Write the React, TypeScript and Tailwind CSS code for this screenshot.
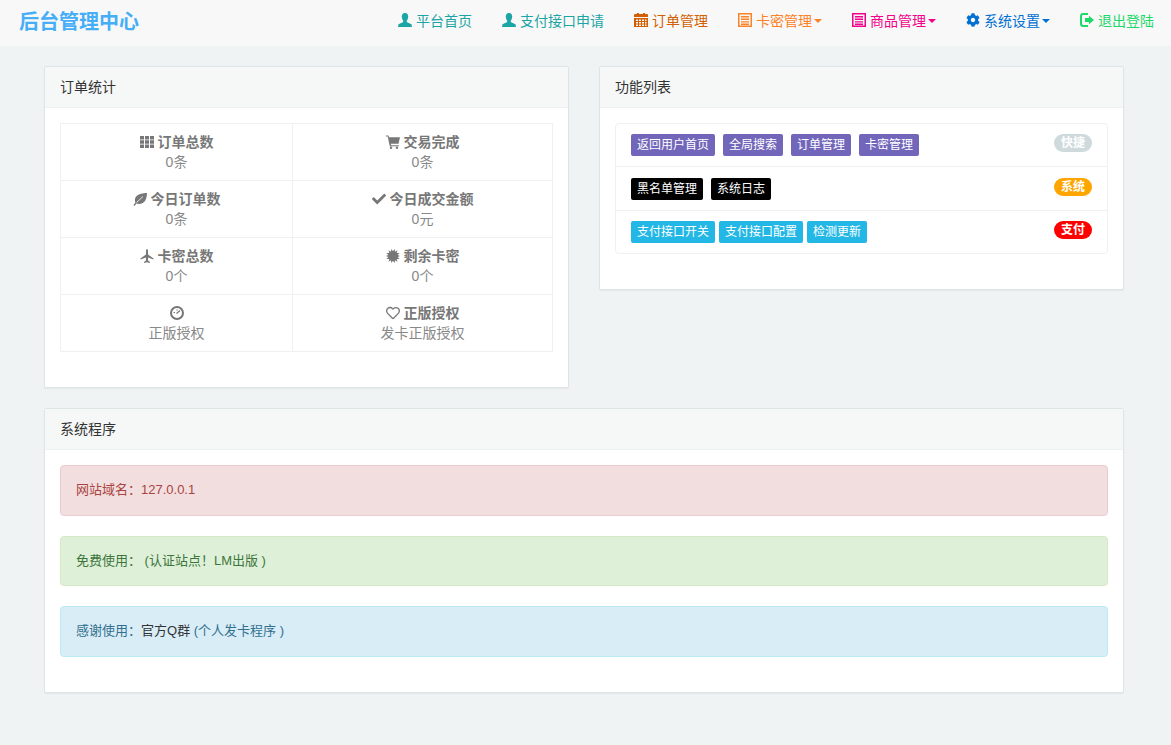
import React from "react";
import { FaCog, FaCheck, FaRegHeart } from "react-icons/fa";

const UserIcon = () => (
  <svg width="14" height="14" viewBox="0 0 14 14" fill="currentColor" className="shrink-0 -mt-[2px]">
    <path d="M7 0C9.200 0 10.200 1.600 10.200 3.600 10.200 5.400 9.400 7 8.800 7.800 8.600 8.600 8.800 9.200 9.600 9.600 11 10.200 13 10.800 13.600 11.600L14 14H0L.4 11.600C1 10.800 3 10.200 4.400 9.600 5.200 9.200 5.400 8.600 5.200 7.800 4.600 7 3.800 5.400 3.800 3.600 3.800 1.600 4.800 0 7 0Z" />
  </svg>
);
const CalendarIcon = () => (
  <svg width="14" height="14" viewBox="0 0 14 14" fill="currentColor" className="shrink-0 -mt-[2px]">
    <path d="M1 1h2V0h2v1h4V0h2v1h2a1 1 0 0 1 1 1v2H0V2a1 1 0 0 1 1-1Z" />
    <path fillRule="evenodd" d="M0 5h14v9H0ZM2 6.500v1.500h2V6.500Zm3 0v1.500h2V6.500Zm3 0v1.500h2V6.500Zm3 0v1.500h1.500V6.500ZM2 9v1.500h2V9Zm3 0v1.500h2V9Zm3 0v1.500h2V9Zm3 0v1.500h1.500V9ZM2 11.500V13h2v-1.500Zm3 0V13h2v-1.500Zm3 0V13h2v-1.500Zm3 0V13h1.500v-1.500Z" />
  </svg>
);
const ListIcon = () => (
  <svg width="14" height="14" viewBox="0 0 14 14" fill="currentColor" className="shrink-0 -mt-[2px]">
    <path fillRule="evenodd" d="M0 0h14v14H0ZM1.500 1.500v11h11v-11ZM3 3h8v1.400H3Zm0 2.600h8V7H3Zm0 2.600h8v1.400H3Zm0 2.400h8V12H3Z" />
  </svg>
);
const LogoutIcon = () => (
  <svg width="14" height="14" viewBox="0 0 14 14" fill="currentColor" className="shrink-0 -mt-[2px]">
    <path d="M3 0h5v2H3.200C2.500 2 2 2.500 2 3.200v7.600c0 .7.5 1.200 1.200 1.200H8v2H3c-1.700 0-3-1.300-3-3V3c0-1.700 1.300-3 3-3Z" />
    <path d="M9 2.800 14 7l-5 4.200V9H5V5h4Z" />
  </svg>
);
const ThIcon = () => (
  <svg width="14" height="14" viewBox="0 0 14 14" fill="currentColor" className="shrink-0">
    <path d="M0 1h4v3.400H0Zm5 0h4v3.400H5Zm5 0h4v3.400h-4ZM0 5.300h4v3.400H0Zm5 0h4v3.400H5Zm5 0h4v3.400h-4ZM0 9.600h4V13H0Zm5 0h4V13H5Zm5 0h4V13h-4Z" />
  </svg>
);
const CartIcon = () => (
  <svg width="14" height="14" viewBox="0 0 14 14" fill="currentColor" className="shrink-0">
    <path d="M0 0.500h2.400l.7 1.800H14l-1.500 6.500H4.800L5.200 10.200h7.600v1H3.800L1.700 1.500H0Z" />
    <circle cx="5" cy="12.700" r="1.200" />
    <circle cx="11" cy="12.700" r="1.200" />
  </svg>
);
const LeafIcon = () => (
  <svg width="14" height="14" viewBox="0 0 14 14" className="shrink-0">
    <path fill="currentColor" d="M14 1C14 1 9 1 5 3 1.500 4.800 1.500 8.500 2.500 10.500L.5 13 1.500 14 3.500 11.500C6 12.500 10 12 12 9 14 6 14 1 14 1Z" />
    <path fill="none" stroke="#fff" strokeWidth="0.800" d="M3.500 10.500 10 4.500" />
  </svg>
);
const PlaneIcon = () => (
  <svg width="14" height="14" viewBox="0 0 14 14" fill="currentColor" className="shrink-0">
    <path d="M7 0C7.700 0 8 1 8 2V5.500L13.500 9.500V10.500L8 8.500V11.500L10 13V14L7 13.200 4 14V13L6 11.500V8.500L.5 10.500V9.500L6 5.500V2C6 1 6.300 0 7 0Z" />
  </svg>
);
const certPoints = Array.from({ length: 28 }, (_, i) => {
  const a = (i * Math.PI) / 14;
  const r = i % 2 ? 4.8 : 7.2;
  return `${(7 + r * Math.cos(a)).toFixed(2)},${(7 + r * Math.sin(a)).toFixed(2)}`;
}).join(" ");
const CertIcon = () => (
  <svg width="14" height="14" viewBox="0 0 14 14" fill="currentColor" className="shrink-0">
    <polygon points={certPoints} />
  </svg>
);
const DashIcon = () => (
  <svg width="14" height="14" viewBox="0 0 14 14" fill="none" stroke="currentColor" className="shrink-0">
    <circle cx="7" cy="7" r="6" strokeWidth="2" />
    <path d="M6.500 7.500 10 4.500M3.500 6.500h1.500M7 3.500v1" strokeWidth="1.200" />
  </svg>
);
const Caret = () => (
  <span className="-ml-[2px] -mt-[1px] inline-block w-0 h-0 border-x-[4.500px] border-x-transparent border-t-[4.500px] border-t-current" />
);

const navItems = [
  { t: "平台首页", c: "text-[#1ca5a5]", i: <UserIcon /> },
  { t: "支付接口申请", c: "text-[#1ca5a5]", i: <UserIcon /> },
  { t: "订单管理", c: "text-[#d35f00]", i: <CalendarIcon /> },
  { t: "卡密管理", c: "text-[#fb8226]", i: <ListIcon />, caret: true },
  { t: "商品管理", c: "text-[#f3008b]", i: <ListIcon />, caret: true },
  { t: "系统设置", c: "text-[#0070d2]", i: <FaCog size={14} className="shrink-0 -mt-[2px]" />, caret: true },
  { t: "退出登陆", c: "text-[#1bd96a]", i: <LogoutIcon /> },
];

const stats = [
  { t: "订单总数", v: "0条", i: <ThIcon /> },
  { t: "交易完成", v: "0条", i: <CartIcon /> },
  { t: "今日订单数", v: "0条", i: <LeafIcon /> },
  { t: "今日成交金额", v: "0元", i: <FaCheck size={14} /> },
  { t: "卡密总数", v: "0个", i: <PlaneIcon /> },
  { t: "剩余卡密", v: "0个", i: <CertIcon /> },
  { t: "", v: "正版授权", i: <DashIcon /> },
  { t: "正版授权", v: "发卡正版授权", i: <FaRegHeart size={14} /> },
];

const Panel = ({ title, children, className = "" }: { title: string; children: React.ReactNode; className?: string }) => (
  <section className={"bg-white border border-[#dee5e7] rounded-[2px] shadow-[0_1px_1px_rgba(0,0,0,0.05)] " + className}>
    <h2 className="h-[41px] px-[15px] flex items-center bg-[#f6f8f8] border-b border-[#edf1f2] text-[14px] font-normal text-[#333]">{title}</h2>
    {children}
  </section>
);

const rows = [
  { bg: "bg-[#7266ba]", gap: "gap-2", h: "h-[43px] border-b border-[#edf1f2]", labels: ["返回用户首页", "全局搜索", "订单管理", "卡密管理"], badge: "快捷", bc: "bg-[#cfdadd]" },
  { bg: "bg-black", gap: "gap-2", h: "h-[44px] border-b border-[#edf1f2]", labels: ["黑名单管理", "系统日志"], badge: "系统", bc: "bg-[#ffa500]" },
  { bg: "bg-[#23b7e5]", gap: "gap-1", h: "h-[42px]", labels: ["支付接口开关", "支付接口配置", "检测更新"], badge: "支付", bc: "bg-[#ff0000]" },
];

const alerts = [
  { c: "bg-[#f2dede] border-[#ebccd1] text-[#a94442]", n: <>网站域名：127.0.0.1</> },
  { c: "bg-[#dff0d8] border-[#d6e9c6] text-[#3c763d]", n: <>免费使用： (认证站点！LM出版 )</> },
  { c: "bg-[#d9edf7] border-[#bce8f1] text-[#31708f]", n: <>感谢使用：<span className="text-[#333]">官方Q群</span> (个人发卡程序 )</> },
];

export default function App() {
  return (
    <div className="min-h-[745px] bg-[#eff3f4] font-['Liberation_Sans','Noto_Sans_CJK_SC',sans-serif] text-[14px] leading-[20px]">
      <nav className="h-[46px] bg-[#f8f8f8] flex items-center pl-[19px] pr-[2px]">
        <span className="text-[20px] font-bold text-[#46aef7] mb-[2px]">后台管理中心</span>
        <ul className="ml-auto flex mb-[4px]">
          {navItems.map((n) => (
            <li key={n.t} className={"px-[15px] flex items-center gap-1 " + n.c}>
              {n.i}
              <span>{n.t}</span>
              {n.caret && <Caret />}
            </li>
          ))}
        </ul>
      </nav>

      <main className="pl-[44px] pr-[47px] pt-[20px]">
        <div className="grid grid-cols-2 gap-x-[30px] items-start">
          <Panel title="订单统计" className="h-[322px]">
            <div className="m-[15px] grid grid-cols-[232px_1fr] border-t border-l border-[#edf1f2] text-center">
              {stats.map((s, i) => (
                <div key={i} className="h-[57px] pt-[8px] border-r border-b border-[#edf1f2] text-[#777]">
                  <div className="flex items-center justify-center gap-1 h-[20px] font-bold">
                    {s.i}
                    {s.t && <span>{s.t}</span>}
                  </div>
                  <div className="text-[#888]">{s.v}</div>
                </div>
              ))}
            </div>
          </Panel>
          <Panel title="功能列表" className="h-[224px]">
            <ul className="m-[15px] border border-[#edf1f2] rounded-[4px]">
              {rows.map((r) => (
                <li key={r.badge} className={"pl-[15px] pr-[15px] flex items-center " + r.h}>
                  <div className={"flex " + r.gap}>
                    {r.labels.map((l) => (
                      <span key={l} className={"h-[22px] px-[6px] flex items-center rounded-[2px] text-white text-[12px] " + r.bg}>{l}</span>
                    ))}
                  </div>
                  <span className={"ml-auto mb-[4px] h-[18px] w-[38px] rounded-[9px] flex items-center justify-center text-white text-[12px] font-bold " + r.bc}>{r.badge}</span>
                </li>
              ))}
            </ul>
          </Panel>
        </div>

        <Panel title="系统程序" className="mt-[20px] h-[285px]">
          <div className="p-[15px] flex flex-col gap-[20px]">
            {alerts.map((a, i) => (
              <div key={i} className={"h-[50.600px] px-[15px] flex items-center border rounded-[4px] whitespace-pre text-[13px] " + a.c}>
                <span>{a.n}</span>
              </div>
            ))}
          </div>
        </Panel>
      </main>
    </div>
  );
}
